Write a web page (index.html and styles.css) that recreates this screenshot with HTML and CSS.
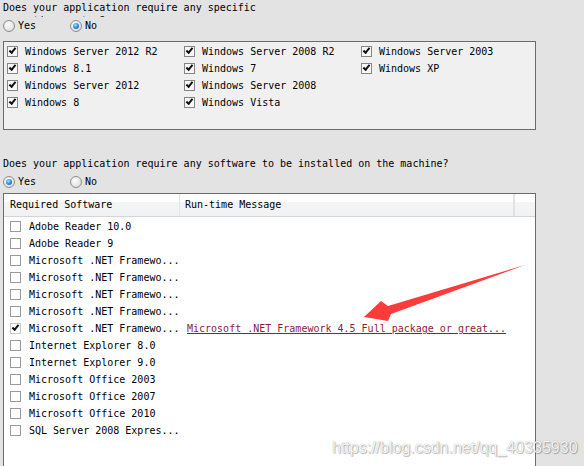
FILE: index.html
```html
<!DOCTYPE html>
<html>
<head>
<meta charset="utf-8">
<link rel="stylesheet" href="styles.css">
</head>
<body>
<div class="page">
  <div class="question clipped">Does your application require any specific<br>operating system?</div>
  <div class="radios">
    <label class="radio"><span class="rb"></span>Yes</label>
    <label class="radio"><span class="rb on"></span>No</label>
  </div>
  <div class="osbox">
    <div class="osgrid">
      <div class="item"><span class="cb on"></span>Windows Server 2012 R2</div>
      <div class="item"><span class="cb on"></span>Windows Server 2008 R2</div>
      <div class="item"><span class="cb on"></span>Windows Server 2003</div>
      <div class="item"><span class="cb on"></span>Windows 8.1</div>
      <div class="item"><span class="cb on"></span>Windows 7</div>
      <div class="item"><span class="cb on"></span>Windows XP</div>
      <div class="item"><span class="cb on"></span>Windows Server 2012</div>
      <div class="item"><span class="cb on"></span>Windows Server 2008</div>
      <div class="item"></div>
      <div class="item"><span class="cb on"></span>Windows 8</div>
      <div class="item"><span class="cb on"></span>Windows Vista</div>
      <div class="item"></div>
    </div>
  </div>
  <div class="question q2">Does your application require any software to be installed on the machine?</div>
  <div class="radios">
    <label class="radio"><span class="rb on"></span>Yes</label>
    <label class="radio"><span class="rb"></span>No</label>
  </div>
  <div class="table">
    <div class="thead">
      <div class="th c1">Required Software</div>
      <div class="th c2">Run-time Message</div>
      <div class="th c3"></div>
    </div>
    <div class="tbody">
      <div class="row"><div class="cell c1"><span class="cb2"></span>Adobe Reader 10.0</div><div class="cell c2"></div></div>
      <div class="row"><div class="cell c1"><span class="cb2"></span>Adobe Reader 9</div><div class="cell c2"></div></div>
      <div class="row"><div class="cell c1"><span class="cb2"></span>Microsoft .NET Framewo...</div><div class="cell c2"></div></div>
      <div class="row"><div class="cell c1"><span class="cb2"></span>Microsoft .NET Framewo...</div><div class="cell c2"></div></div>
      <div class="row"><div class="cell c1"><span class="cb2"></span>Microsoft .NET Framewo...</div><div class="cell c2"></div></div>
      <div class="row"><div class="cell c1"><span class="cb2"></span>Microsoft .NET Framewo...</div><div class="cell c2"></div></div>
      <div class="row"><div class="cell c1"><span class="cb2 on"></span>Microsoft .NET Framewo...</div><div class="cell c2"><a class="link" href="#">Microsoft .NET Framework 4.5 Full package or great...</a></div></div>
      <div class="row"><div class="cell c1"><span class="cb2"></span>Internet Explorer 8.0</div><div class="cell c2"></div></div>
      <div class="row"><div class="cell c1"><span class="cb2"></span>Internet Explorer 9.0</div><div class="cell c2"></div></div>
      <div class="row"><div class="cell c1"><span class="cb2"></span>Microsoft Office 2003</div><div class="cell c2"></div></div>
      <div class="row"><div class="cell c1"><span class="cb2"></span>Microsoft Office 2007</div><div class="cell c2"></div></div>
      <div class="row"><div class="cell c1"><span class="cb2"></span>Microsoft Office 2010</div><div class="cell c2"></div></div>
      <div class="row"><div class="cell c1"><span class="cb2"></span>SQL Server 2008 Expres...</div><div class="cell c2"></div></div>
    </div>
  </div>
  <svg class="arrow" width="584" height="466" viewBox="0 0 584 466">
    <polygon points="364,317 381,301 388,306 525,265 391,314 388,321" fill="#fd3b3b"/>
  </svg>
  <div class="watermark">https://blog.csdn.net/qq_40335930</div>
</div>
</body>
</html>
```

FILE: styles.css
```css
html, body {
  margin: 0;
  padding: 0;
  background: #e3e3e3;
  overflow: hidden;
}
.page {
  position: relative;
  width: 584px;
  height: 466px;
  overflow: hidden;
  font-family: "DejaVu Sans Mono", "Liberation Mono", monospace;
  font-size: 10px;
  color: #000;
}
.question {
  padding-left: 3px;
  line-height: 13px;
  white-space: nowrap;
}
.clipped {
  height: 16px;
  padding-top: 1px;
  overflow: hidden;
}
.q2 {
  margin-top: 27px;
}
.radios {
  display: flex;
  padding-left: 3px;
  height: 15px;
  align-items: center;
  margin-top: 1px;
}
.q2 + .radios {
  margin-top: 4px;
}
.radio {
  display: flex;
  align-items: center;
  width: 67px;
  gap: 3px;
}
.rb {
  position: relative;
  width: 12px;
  height: 12px;
  box-sizing: border-box;
  border-radius: 50%;
  border: 1px solid #8d8d8d;
  background: radial-gradient(circle at 40% 35%, #fdfdfd 0, #e6e6e6 60%, #d2d2d2 100%);
  flex: none;
}
.rb.on::after {
  content: "";
  position: absolute;
  left: 2px;
  top: 2px;
  width: 6px;
  height: 6px;
  border-radius: 50%;
  background: radial-gradient(circle at 40% 35%, #9be6ff 0, #2c8ee2 50%, #0d3f85 100%);
}
.osbox {
  margin: 8px 0 0 3px;
  width: 533px;
  height: 89px;
  box-sizing: border-box;
  border: 1px solid #6b6b6b;
  background: #f0f0f0;
  padding: 1px 0 0 3px;
}
.osgrid {
  display: grid;
  grid-template-columns: 177px 177px 177px;
  grid-auto-rows: 17px;
}
.item {
  display: flex;
  align-items: center;
  white-space: nowrap;
}
.cb {
  position: relative;
  width: 11px;
  height: 11px;
  box-sizing: border-box;
  border: 1px solid #858585;
  background: #f7f7f7;
  margin-right: 7px;
  flex: none;
}
.cb.on::after,
.cb2.on::after {
  content: "";
  position: absolute;
  left: 1px;
  top: 1px;
  width: 5px;
  height: 2px;
  border-left: 2px solid #111;
  border-bottom: 2px solid #111;
  transform: rotate(-50deg);
}
.table {
  margin: 4px 0 0 3px;
  width: 533px;
  height: 300px;
  box-sizing: border-box;
  border: 1px solid #6b6b6b;
  background: #fff;
}
.thead {
  display: flex;
  height: 23px;
  box-sizing: border-box;
  border-bottom: 1px solid #d5d5d5;
  background: linear-gradient(#ffffff 0, #ffffff 8px, #f4f5f7 8px, #f1f2f4 100%);
}
.th {
  line-height: 22px;
  white-space: nowrap;
}
.th.c1 {
  width: 176px;
  padding-left: 6px;
  box-sizing: border-box;
  border-right: 1px solid #e4e5e7;
}
.th.c2 {
  width: 335px;
  padding-left: 5px;
  box-sizing: border-box;
  border-right: 2px solid #e2e3e5;
}
.th.c3 {
  flex: 1;
}
.tbody {
  padding-top: 1px;
}
.row {
  display: flex;
  height: 17px;
  align-items: center;
}
.cell {
  white-space: nowrap;
}
.cell.c1 {
  width: 177px;
  padding-left: 6px;
  box-sizing: border-box;
  display: flex;
  align-items: center;
}
.cell.c2 {
  padding-left: 6px;
}
.cb2 {
  position: relative;
  width: 11px;
  height: 11px;
  box-sizing: border-box;
  border: 1px solid #9a9a9a;
  background: #fff;
  margin-right: 8px;
  flex: none;
}
.cb2.on {
  border-color: #c8c8c8;
}
.link {
  color: #8c1d40;
  text-decoration: underline;
}
.arrow {
  position: absolute;
  left: 0;
  top: 0;
  pointer-events: none;
}
.watermark {
  position: absolute;
  left: 332px;
  top: 439px;
  font-family: "Liberation Sans", Arial, sans-serif;
  font-size: 16px;
  line-height: 18px;
  color: rgba(255, 255, 255, 0.9);
  text-shadow: 0 0 1px rgba(0, 0, 0, 0.35), 1px 1px 1px rgba(0, 0, 0, 0.25);
  white-space: nowrap;
  pointer-events: none;
}
```
